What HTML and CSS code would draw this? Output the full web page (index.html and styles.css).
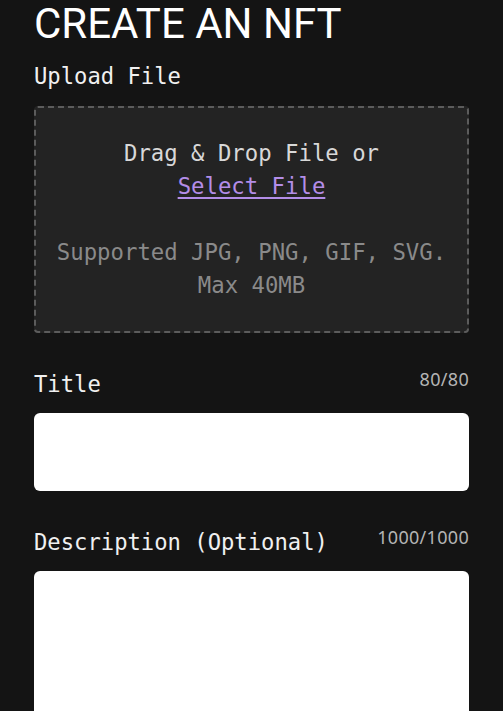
FILE: index.html
```html
<!DOCTYPE html>
<html lang="en">
<head>
<meta charset="utf-8">
<title>Create an NFT</title>
<link rel="stylesheet" href="styles.css">
</head>
<body>
<main class="page">
  <h1 class="heading">CREATE AN NFT</h1>

  <section class="field field-upload">
    <label class="label">Upload File</label>
    <div class="dropzone">
      <p class="drop-text">Drag &amp; Drop File or<br><a class="select-link" href="#">Select File</a></p>
      <p class="drop-hint">Supported JPG, PNG, GIF, SVG.<br>Max 40MB</p>
    </div>
  </section>

  <section class="field">
    <div class="label-row">
      <label class="label" for="title">Title</label>
      <span class="counter">80/80</span>
    </div>
    <input class="text-input" id="title" type="text">
  </section>

  <section class="field">
    <div class="label-row">
      <label class="label" for="desc">Description (Optional)</label>
      <span class="counter">1000/1000</span>
    </div>
    <textarea class="text-area" id="desc"></textarea>
  </section>
</main>
</body>
</html>
```

FILE: styles.css
```css
* {
  box-sizing: border-box;
}

html, body {
  margin: 0;
  padding: 0;
  background: #141414;
}

body {
  overflow: hidden;
}

.page {
  padding: 0 34px;
  display: flex;
  flex-direction: column;
}

.heading {
  margin: 0 0 12px;
  font-family: Roboto, "Liberation Sans", sans-serif;
  font-weight: 400;
  font-size: 42px;
  line-height: 48px;
  color: #ffffff;
}

.field {
  display: flex;
  flex-direction: column;
  margin-bottom: 35px;
}

.label {
  display: block;
  font-family: "DejaVu Sans Mono", "Liberation Mono", monospace;
  font-size: 22.2px;
  line-height: 33px;
  color: #f0f0f0;
  margin-bottom: 12px;
}

.field-upload .label {
  margin-bottom: 13px;
}

.label-row {
  display: flex;
  justify-content: space-between;
  align-items: flex-start;
}

.counter {
  font-family: "Noto Sans", "Open Sans", sans-serif;
  font-size: 18px;
  line-height: 22px;
  color: #b4b4b4;
  letter-spacing: 0.3px;
}

.dropzone {
  background: #232323;
  border: 2px dashed #5c5c5c;
  border-radius: 4px;
  padding: 29px 10px;
  text-align: center;
  font-family: "DejaVu Sans Mono", "Liberation Mono", monospace;
  font-size: 22.3px;
  line-height: 33px;
}

.drop-text {
  margin: 0 0 33px;
  color: #d8d8d8;
}

.select-link {
  color: #b38de8;
  text-decoration: underline;
  text-underline-offset: 3px;
}

.drop-hint {
  margin: 0;
  color: #8a8a8a;
}

.text-input {
  display: block;
  width: 100%;
  height: 78px;
  border: none;
  border-radius: 6px;
  background: #ffffff;
  outline: none;
}

.text-area {
  display: block;
  width: 100%;
  height: 200px;
  border: none;
  border-radius: 6px;
  background: #ffffff;
  resize: none;
  outline: none;
}
```
